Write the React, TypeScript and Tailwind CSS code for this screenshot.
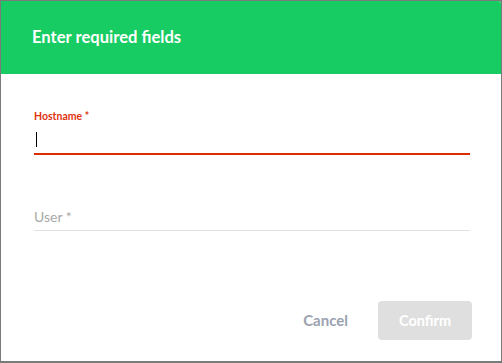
import React from 'react';

const App: React.FC = () => {
  return (
    <div className="w-[502px] h-[363px] bg-[#7b7b7b] pl-px pt-px" style={{ fontFamily: 'Lato, "Open Sans", sans-serif' }}>
      <div className="w-[500px] h-[360px] bg-white rounded-tr-[3px] overflow-hidden flex flex-col">
        {/* Header */}
        <div className="h-[73px] bg-[#17cc62] flex items-center px-[31px] shrink-0">
          <h1 className="text-white text-[16.6px] font-bold leading-none">Enter required fields</h1>
        </div>

        {/* Fields */}
        <div className="px-[33px] pr-[31px] pt-[36px]">
          <div>
            <label className="block text-[10.5px] leading-[12px] font-bold text-[#e0330f]">Hostname *</label>
            <div className="h-[33px] border-b-2 border-[#dd2c00] flex items-end pb-[6px]">
              <div className="w-px h-[15px] bg-black ml-[2px]" />
            </div>
          </div>
          <div className="h-[76px] border-b border-[#e3e3e3] flex items-end pb-[5px]">
            <span className="text-[14px] leading-[16px] text-[#a9a9a9]">User *</span>
          </div>
        </div>

        {/* Actions */}
        <div className="flex justify-end items-center gap-[30px] pr-[29px] mt-[70px]">
          <button className="text-[15px] font-bold text-[#9ba2b0]">Cancel</button>
          <button className="w-[94px] h-[39px] rounded-[4px] bg-[#dfdfdf] text-white text-[14.5px] font-bold">Confirm</button>
        </div>
      </div>
    </div>
  );
};

export default App;
